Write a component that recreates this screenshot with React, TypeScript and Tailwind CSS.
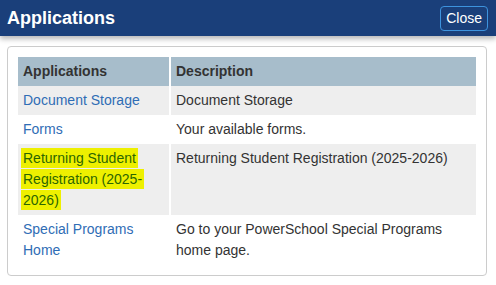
import React from "react"

type AppRow = {
  name: string
  description: string
  highlight?: boolean
}

const rows: AppRow[] = [
  { name: "Document Storage", description: "Document Storage" },
  { name: "Forms", description: "Your available forms." },
  {
    name: "Returning Student Registration (2025-2026)",
    description: "Returning Student Registration (2025-2026)",
    highlight: true,
  },
  { name: "Special Programs Home", description: "Go to your PowerSchool Special Programs home page." },
]

export default function App() {
  return (
    <div className="h-[285px] w-[496px] bg-white font-['Liberation_Sans',Arial,sans-serif] text-[14px] text-[#333]">
      <header className="relative z-10 flex h-[36px] items-center justify-between bg-[#1a3f7a] pl-[7px] pr-[8px] shadow-[0_3px_5px_rgba(0,0,0,0.28)]">
        <h1 className="text-[18px] font-bold leading-none text-white">Applications</h1>
        <button
          type="button"
          className="h-[25px] rounded-[4px] border border-[#3d93de] px-[5px] text-[14px] leading-none text-white"
        >
          Close
        </button>
      </header>

      <div className="ml-[7px] mt-[10px] w-[480px] rounded-[4px] border border-[#cccccc] p-[10px]">
        <table className="w-full table-fixed border-collapse leading-[21px]">
          <colgroup>
            <col className="w-[152px]" />
            <col />
          </colgroup>
          <thead>
            <tr className="bg-[#a7bdcb]">
              <th className="px-[5px] py-[4px] text-left font-bold">Applications</th>
              <th className="border-l-2 border-white px-[5px] py-[4px] text-left font-bold">Description</th>
            </tr>
          </thead>
          <tbody>
            {rows.map((row, i) => (
              <tr key={row.name} className={i % 2 === 0 ? "bg-[#eeeeee]" : "bg-white"}>
                <td className="px-[5px] py-[4px] align-top">
                  {row.highlight ? (
                    <a className="box-decoration-clone bg-[#eef000] px-[2px] py-[2px] -ml-[2px] text-[#2c6600]">
                      {row.name}
                    </a>
                  ) : (
                    <a className="text-[#2f6db5]">{row.name}</a>
                  )}
                </td>
                <td className="border-l-2 border-white px-[5px] py-[4px] align-top">{row.description}</td>
              </tr>
            ))}
          </tbody>
        </table>
      </div>
    </div>
  )
}
